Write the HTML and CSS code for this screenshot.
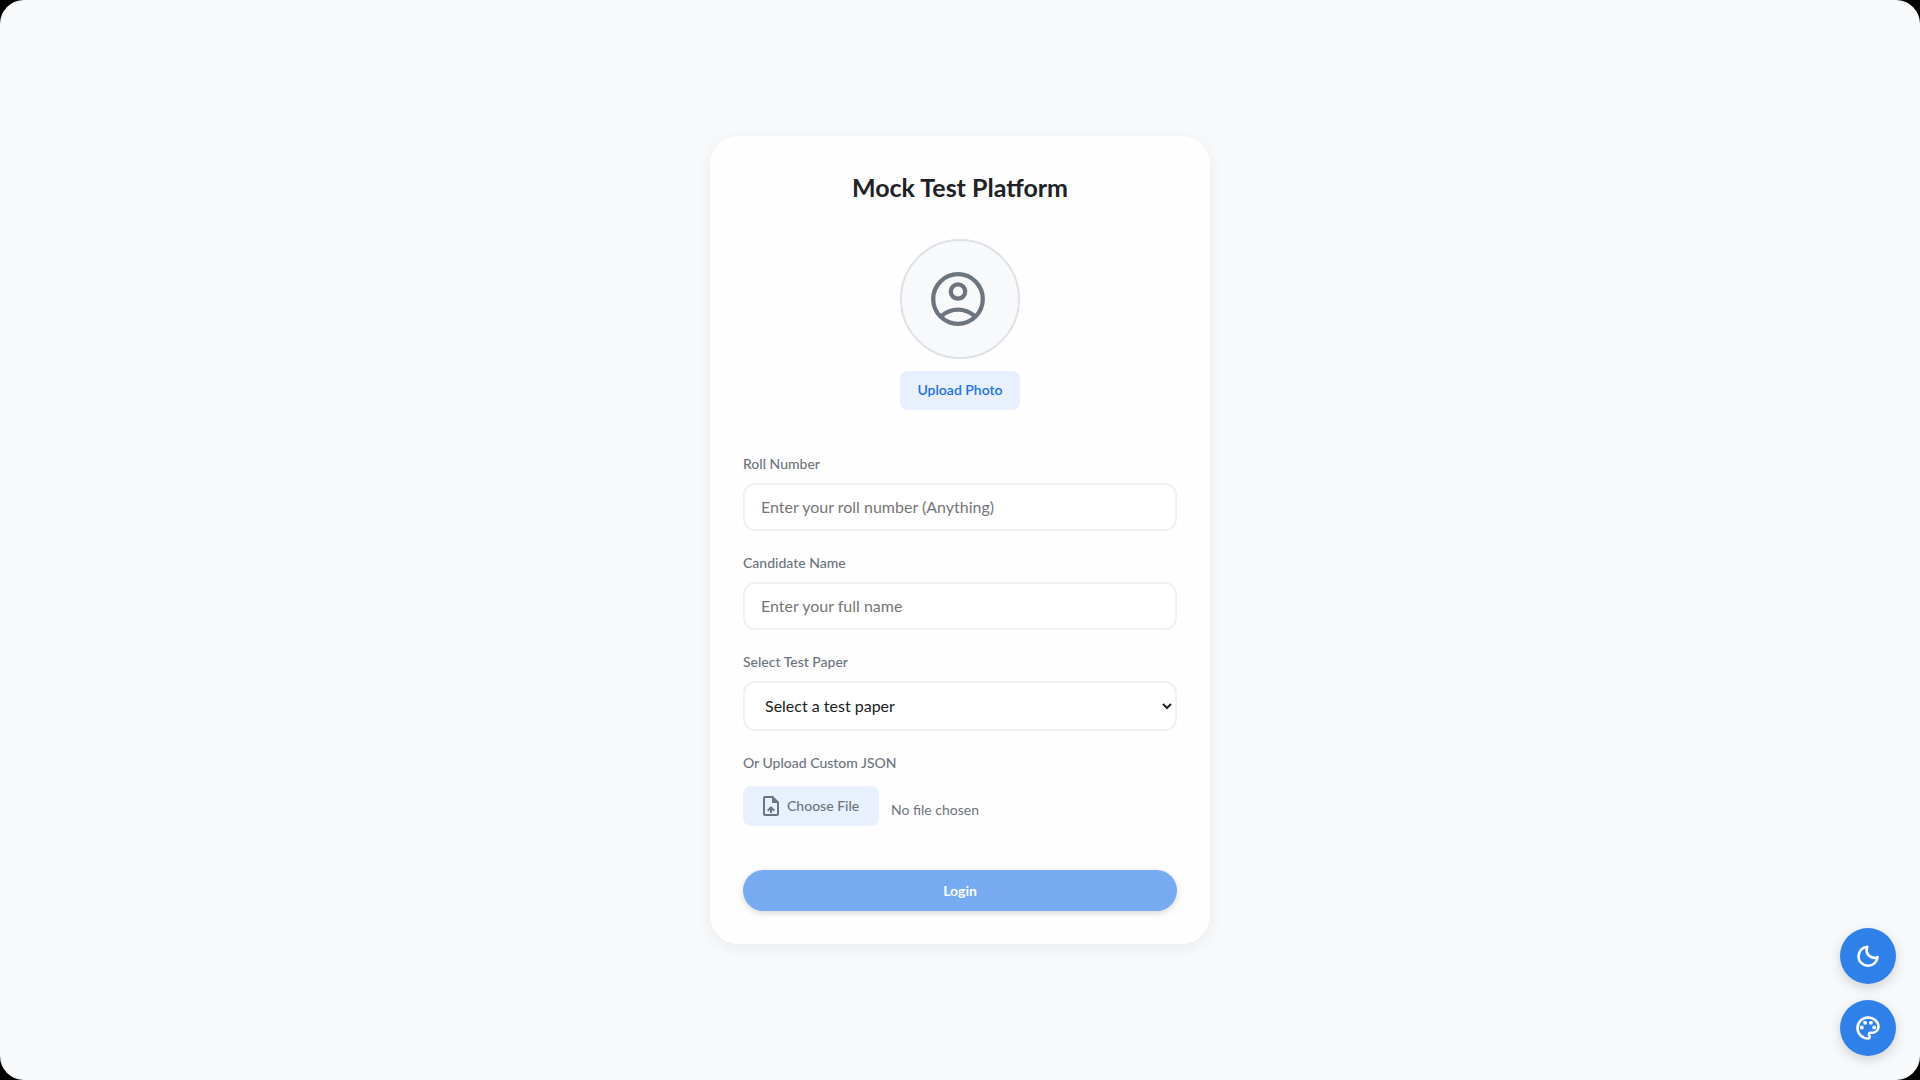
FILE: index.html
```html
<!DOCTYPE html>
<html lang="en">
<head>
<meta charset="utf-8">
<meta name="viewport" content="width=device-width, initial-scale=1">
<title>Mock Test Platform</title>
<link rel="stylesheet" href="styles.css">
</head>
<body>
<main class="page">
  <section class="card">
    <h1 class="title">Mock Test Platform</h1>
    <form class="form">
      <div class="photo">
        <div class="avatar">
          <svg class="avatar-icon" viewBox="0 0 24 24" aria-hidden="true">
            <g fill="none" stroke="currentColor" stroke-width="1.6">
              <circle cx="12" cy="12" r="9.3"/>
              <circle cx="12" cy="9.2" r="2.7"/>
              <path d="M5.7 18.4C7.500 16.900 9.700 16 12 16s4.500.9 6.300 2.400"/>
            </g>
          </svg>
        </div>
        <button class="tonal upload" type="button">Upload Photo</button>
      </div>
      <div class="field">
        <label class="label" for="roll">Roll Number</label>
        <input class="control" id="roll" type="text" placeholder="Enter your roll number (Anything)">
      </div>
      <div class="field">
        <label class="label" for="name">Candidate Name</label>
        <input class="control" id="name" type="text" placeholder="Enter your full name">
      </div>
      <div class="field">
        <label class="label" for="paper">Select Test Paper</label>
        <select class="control select" id="paper"><option>Select a test paper</option></select>
      </div>
      <div class="field">
        <label class="label" for="json">Or Upload Custom JSON</label>
        <div class="file-row">
          <input class="file-input" id="json" type="file" accept=".json">
          <label class="tonal choose" for="json">
            <svg class="file-icon" viewBox="0 0 24 24" aria-hidden="true"><path fill="currentColor" fill-rule="evenodd" d="M6 2H14L20 8V20a2 2 0 0 1-2 2H6A2 2 0 0 1 4 20V4A2 2 0 0 1 6 2zM6 4V20H18V9H13V4zM11 19v-3.200l-1.600 1.600L8 16 12 12l4 4-1.400 1.400L13 15.800V19z"/></svg>
            Choose File
          </label>
          <span class="file-name">No file chosen</span>
        </div>
      </div>
      <button class="login" type="submit">Login</button>
    </form>
  </section>
</main>
<div class="fabs">
  <button class="fab" type="button" aria-label="Dark mode">
    <svg class="fab-icon" viewBox="0 0 24 24" aria-hidden="true"><path fill="none" stroke="currentColor" stroke-width="2.2" stroke-linejoin="round" d="M11.400 4A8.200 8.200 0 1 0 20.200 12.900C15 15.300 9 10.500 11.400 4z"/></svg>
  </button>
  <button class="fab" type="button" aria-label="Color theme">
    <svg class="fab-icon" viewBox="0 0 24 24" aria-hidden="true"><path fill="none" stroke="currentColor" stroke-width="2.200" d="M12 21C7.040 21 3 16.960 3 12S7.040 3 12 3s9 3.600 9 8c0 2.760-2.240 5-5 5h-1.770c-.830 0-1.500.670-1.500 1.500 0 .380.150.730.380.990.250.280.390.630.390 1.010 0 .830-.670 1.500-1.500 1.500z"/><g fill="currentColor"><circle cx="6.700" cy="11.500" r="1.700"/><circle cx="9.500" cy="7.600" r="1.700"/><circle cx="14.500" cy="7.600" r="1.700"/><circle cx="17.300" cy="11.500" r="1.700"/></g></svg>
  </button>
</div>
</body>
</html>
```
FILE: styles.css
```css
* {
  box-sizing: border-box;
}

body {
  margin: 0;
  background: #000;
  color: #202124;
  font-family: Lato, "Open Sans", sans-serif;
  font-size: 16px;
  line-height: 24px;
}

button,
input,
select {
  font: inherit;
}

.page {
  min-height: 100vh;
  display: grid;
  place-items: center;
  padding: 24px;
  border-radius: 24px;
  background: #f8f9fb;
}

.card {
  width: 100%;
  max-width: 500px;
  padding: 33px;
  border-radius: 28px;
  background: #fefefe;
  box-shadow: 0 4px 16px rgba(0, 0, 0, 0.06);
}

.title {
  margin: 0 0 34px;
  font-size: 25px;
  line-height: 36px;
  font-weight: 700;
  text-align: center;
}

.form {
  display: flex;
  flex-direction: column;
  gap: 20px;
}

.photo {
  display: flex;
  flex-direction: column;
  align-items: center;
  gap: 12px;
  margin-bottom: 22px;
}

.avatar {
  display: flex;
  align-items: center;
  justify-content: center;
  width: 120px;
  height: 120px;
  border: 2px solid #dee1e6;
  border-radius: 50%;
  background: #f8f9fb;
  color: #6c757d;
}

.avatar-icon {
  width: 64px;
  height: 64px;
  margin-right: 4px;
}

.tonal {
  border: 0;
  border-radius: 8px;
  background: #e8f0fe;
  font-size: 14px;
  line-height: 24px;
  font-weight: 500;
  padding: 8px 16px;
  cursor: pointer;
}

.upload {
  width: 120px;
  padding: 7px 0 9px;
  line-height: 23px;
  font-weight: 600;
  color: #1a73e8;
}

.field {
  display: flex;
  flex-direction: column;
  gap: 8px;
}

.label {
  font-size: 14px;
  line-height: 23px;
  font-weight: 500;
  color: #6c757d;
}

.control {
  width: 100%;
  height: 48px;
  padding: 0 16px 2px;
  border: 2px solid #f1f1f2;
  border-radius: 12px;
  background: #fff;
  color: #202124;
}

.control::placeholder {
  color: #757575;
}

.select {
  height: 50px;
}

.file-row {
  display: flex;
  align-items: center;
  gap: 12px;
  padding-top: 4px;
}

.file-input {
  position: absolute;
  width: 1px;
  height: 1px;
  opacity: 0;
}

.choose {
  display: flex;
  align-items: center;
  gap: 4px;
  min-width: 136px;
  color: #6c757d;
}

.file-icon {
  width: 24px;
  height: 24px;
}

.file-name {
  padding-top: 8px;
  font-size: 14px;
  color: #6c757d;
}

.login {
  width: 100%;
  height: 41px;
  margin-top: 24px;
  border: 0;
  border-radius: 24px;
  background: #76aaf1;
  color: #fff;
  font-size: 14px;
  font-weight: 700;
  box-shadow: 0 2px 6px rgba(0, 0, 0, 0.16);
}

.fabs {
  position: fixed;
  right: 24px;
  bottom: 24px;
  display: flex;
  flex-direction: column;
  gap: 16px;
}

.fab {
  display: grid;
  place-items: center;
  width: 56px;
  height: 56px;
  padding: 0;
  border: 0;
  border-radius: 50%;
  background: #3080e9;
  color: #fff;
  box-shadow: 0 4px 12px rgba(0, 0, 0, 0.16);
}

.fab-icon {
  width: 28px;
  height: 28px;
}
```
